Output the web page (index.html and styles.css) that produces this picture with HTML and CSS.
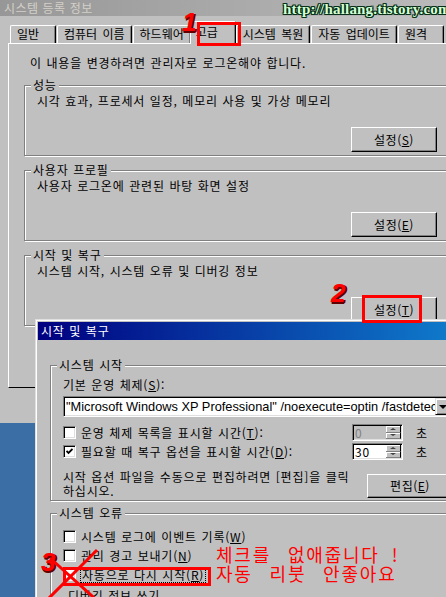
FILE: index.html
```html
<!DOCTYPE html>
<html lang="ko">
<head>
    <meta charset="UTF-8">
    <title>시스템 등록 정보</title>
    <link rel="stylesheet" href="styles.css">
</head>
<body>
    <div class="window">
        <div class="titlebar">시스템 등록 정보</div>
        <div class="tabs">
            <div class="tab">일반</div>
            <div class="tab">컴퓨터 이름</div>
            <div class="tab">하드웨어</div>
            <div class="tab active">고급</div>
            <div class="tab">시스템 복원</div>
            <div class="tab">자동 업데이트</div>
            <div class="tab">원격</div>
        </div>
        <div class="panel">
            <p class="notice">이 내용을 변경하려면 관리자로 로그온해야 합니다.</p>
            <div class="group">
                <span class="group-title">성능</span>
                <p class="group-desc">시각 효과, 프로세서 일정, 메모리 사용 및 가상 메모리</p>
                <button class="btn">설정(<u>S</u>)</button>
            </div>
            <div class="group">
                <span class="group-title">사용자 프로필</span>
                <p class="group-desc">사용자 로그온에 관련된 바탕 화면 설정</p>
                <button class="btn">설정(<u>E</u>)</button>
            </div>
            <div class="group">
                <span class="group-title">시작 및 복구</span>
                <p class="group-desc">시스템 시작, 시스템 오류 및 디버깅 정보</p>
                <button class="btn">설정(<u>T</u>)</button>
            </div>
        </div>
    </div>

    <div class="dialog">
        <div class="dialog-title">
            <span class="dialog-name">시작 및 복구</span>
            <span class="title-btn">?</span>
            <span class="title-btn">×</span>
        </div>
        <div class="dialog-body">
            <div class="group dlg-group">
                <span class="group-title">시스템 시작</span>
                <p class="field-label">기본 운영 체제(<u>S</u>):</p>
                <div class="select">
                    <span class="select-text">"Microsoft Windows XP Professional" /noexecute=optin /fastdetect</span>
                    <span class="select-arrow"><i class="tri-down"></i></span>
                </div>
                <div class="opt-row first">
                    <label class="check-line"><span class="check"></span><span>운영 체제 목록을 표시할 시간(<u>T</u>):</span></label>
                    <div class="spin disabled">
                        <span class="spin-value">0</span>
                        <span class="spin-btns"><span class="spin-btn"><i class="tri-up"></i></span><span class="spin-btn"><i class="tri-down small"></i></span></span>
                    </div>
                    <span class="unit">초</span>
                </div>
                <div class="opt-row">
                    <label class="check-line"><span class="check"><svg width="7" height="7" viewBox="0 0 7 7"><polyline points="0.5,3 2.5,5 6.5,1" fill="none" stroke="#000" stroke-width="1.8"/></svg></span><span>필요할 때 복구 옵션을 표시할 시간(<u>D</u>):</span></label>
                    <div class="spin">
                        <span class="spin-value">30</span>
                        <span class="spin-btns"><span class="spin-btn"><i class="tri-up"></i></span><span class="spin-btn"><i class="tri-down small"></i></span></span>
                    </div>
                    <span class="unit">초</span>
                </div>
                <div class="edit-row">
                    <p class="edit-text">시작 옵션 파일을 수동으로 편집하려면 [편집]을 클릭 하십시오.</p>
                    <button class="btn btn-edit">편집(<u>E</u>)</button>
                </div>
            </div>

            <div class="group dlg-group errors">
                <span class="group-title">시스템 오류</span>
                <label class="check-line row first"><span class="check"></span><span>시스템 로그에 이벤트 기록(<u>W</u>)</span></label>
                <label class="check-line row"><span class="check"></span><span>관리 경고 보내기(<u>N</u>)</span></label>
                <label class="check-line row"><span class="check"></span><span class="focus">자동으로 다시 시작(<u>R</u>)</span></label>
                <p class="sub-title">디버깅 정보 쓰기</p>
            </div>
        </div>
    </div>

    <div class="watermark">http://hallang.tistory.com</div>

    <span class="num num-1">1</span>
    <span class="num num-2">2</span>
    <span class="num num-3">3</span>
    <div class="mark mark-tab"></div>
    <div class="mark mark-btn"></div>
    <div class="mark mark-check"></div>
    <svg class="cross" width="70" height="60" viewBox="0 0 70 60">
        <line x1="5" y1="57" x2="57" y2="5" stroke="#f00" stroke-width="3"/>
        <line x1="10" y1="13" x2="62" y2="60" stroke="#f00" stroke-width="3"/>
    </svg>
    <div class="memo">체크를 없애줍니다<span class="bang">!</span><br>자동 리붓 안좋아요</div>
</body>
</html>
```

FILE: styles.css
```css
body {
    margin: 0;
    width: 446px;
    height: 597px;
    overflow: hidden;
    position: relative;
    background: #3a6ea5;
    font-family: "Noto Sans CJK KR", "Noto Sans", sans-serif;
    font-size: 12px;
    line-height: 14px;
    letter-spacing: 0.8px;
    word-spacing: 0.5px;
    color: #000;
}

p {
    margin: 0;
}

/* main window */

.window {
    width: 480px;
    height: 423px;
    background: #c0c0c0;
}

.titlebar {
    height: 16px;
    line-height: 16px;
    padding-left: 4px;
    letter-spacing: 0.4px;
    color: #d4d0c8;
    background: linear-gradient(90deg, #979797, #bdbdbd);
}

.tabs {
    display: flex;
    align-items: flex-end;
    gap: 1px;
    height: 27px;
    padding-left: 10px;
    letter-spacing: normal;
    word-spacing: 2px;
}

.tab {
    flex: none;
    box-sizing: border-box;
    min-width: 46px;
    height: 18px;
    padding: 0 6px;
    line-height: 16px;
    border-top: 1px solid #fff;
    border-left: 1px solid #fff;
    border-right: 1px solid #000;
    border-radius: 2px 2px 0 0;
    box-shadow: inset -1px 0 #808080;
}

.tab.active {
    position: relative;
    z-index: 1;
    height: 23px;
    margin: 0 -1px -1px -2px;
    padding: 2px 8px 0 5px;
    background: #c0c0c0;
}

.panel {
    box-sizing: border-box;
    width: 470px;
    height: 345px;
    margin-left: 8px;
    padding: 12px 0 0 15px;
    border-top: 1px solid #fff;
    border-left: 1px solid #fff;
    border-bottom: 1px solid #000;
}

.notice {
    margin: 0 0 15px 6px;
}

/* etched group box */

.group {
    display: flex;
    flex-direction: column;
    box-sizing: border-box;
    width: 425px;
    height: 71px;
    margin: 0 0 14px;
    padding: 0 11px 3px 12px;
    border: 1px solid #808080;
    box-shadow: inset 1px 1px #fff, 1px 1px #fff;
}

.group-title {
    align-self: flex-start;
    margin: -8px 0 0 -6px;
    padding: 0 2px;
    background: #c0c0c0;
}

.group-desc {
    margin-top: 2px;
}

.btn {
    align-self: flex-end;
    box-sizing: border-box;
    width: 86px;
    height: 25px;
    margin-top: auto;
    padding: 0;
    font: inherit;
    letter-spacing: 0.5px;
    color: #000;
    background: #c0c0c0;
    border: 1px solid;
    border-color: #fff #000 #000 #fff;
    box-shadow: inset -1px -1px #808080;
}

/* dialog */

.dialog {
    position: absolute;
    left: 35px;
    top: 319px;
    z-index: 2;
    width: 446px;
    height: 300px;
    padding: 2px;
    background: #c0c0c0;
    border: 1px solid;
    border-color: #dfdfdf #000 #000 #dfdfdf;
    box-shadow: inset 1px 1px #fff, inset -1px -1px #808080;
}

.dialog-title {
    display: flex;
    align-items: center;
    gap: 2px;
    height: 18px;
    padding: 0 2px 0 3px;
    color: #fff;
    background: linear-gradient(90deg, #000080, #1084d0);
}

.dialog-name {
    flex: 1;
}

.title-btn {
    box-sizing: border-box;
    width: 16px;
    height: 14px;
    font-size: 10px;
    line-height: 11px;
    letter-spacing: normal;
    text-align: center;
    color: #000;
    background: #c0c0c0;
    border: 1px solid;
    border-color: #fff #000 #000 #fff;
    box-shadow: inset -1px -1px #808080;
}

.dialog-body {
    padding: 25px 12px 0;
}

.dlg-group {
    width: 416px;
    height: auto;
    margin: 0;
    padding: 0 12px 2px;
}

.field-label {
    margin-top: 6px;
}

.select {
    display: flex;
    box-sizing: border-box;
    height: 21px;
    margin-top: 4px;
    background: #fff;
    border: 1px solid;
    border-color: #808080 #fff #fff #808080;
    box-shadow: inset 1px 1px #000, inset -1px -1px #dfdfdf;
}

.select-text {
    flex: 1;
    overflow: hidden;
    padding-left: 2px;
    font-family: "Liberation Sans", Arial, sans-serif;
    font-size: 12.8px;
    line-height: 19px;
    letter-spacing: normal;
    word-spacing: normal;
    white-space: nowrap;
}

.select-arrow {
    flex: none;
    display: flex;
    align-items: center;
    justify-content: center;
    box-sizing: border-box;
    width: 16px;
    margin: 1px 1px 1px 0;
    background: #c0c0c0;
    border: 1px solid;
    border-color: #dfdfdf #000 #000 #dfdfdf;
    box-shadow: inset 1px 1px #fff, inset -1px -1px #808080;
}

.tri-down {
    border-top: 4px solid #000;
    border-left: 4px solid transparent;
    border-right: 4px solid transparent;
}

.tri-up {
    border-bottom: 2px solid #404040;
    border-left: 3px solid transparent;
    border-right: 3px solid transparent;
}

.tri-down.small {
    border-top: 2px solid #404040;
    border-left-width: 3px;
    border-right-width: 3px;
}

.opt-row {
    display: grid;
    grid-template-columns: 1fr 51px 50px;
    align-items: center;
    height: 19px;
}

.opt-row.first {
    margin-top: 6px;
}

.check-line {
    display: flex;
    align-items: center;
    gap: 5px;
    white-space: nowrap;
}

.check {
    flex: none;
    display: flex;
    align-items: center;
    justify-content: center;
    box-sizing: border-box;
    width: 13px;
    height: 13px;
    background: #fff;
    border: 1px solid;
    border-color: #808080 #fff #fff #808080;
    box-shadow: inset 1px 1px #000, inset -1px -1px #dfdfdf;
}

.spin {
    display: flex;
    box-sizing: border-box;
    height: 17px;
    background: #fff;
    border: 1px solid;
    border-color: #808080 #fff #fff #808080;
    box-shadow: inset 1px 1px #000, inset -1px -1px #dfdfdf;
}

.spin.disabled {
    color: #808080;
    background: #c0c0c0;
}

.spin-value {
    flex: 1;
    padding-left: 2px;
    line-height: 15px;
}

.spin-btns {
    display: flex;
    flex-direction: column;
    width: 15px;
    margin: 1px 1px 1px 0;
}

.spin-btn {
    flex: 1;
    display: flex;
    align-items: center;
    justify-content: center;
    background: #c0c0c0;
    border-right: 1px solid #000;
    border-bottom: 1px solid #808080;
    box-shadow: inset 1px 1px #fff;
}

.unit {
    padding-left: 13px;
}

.edit-row {
    display: flex;
    align-items: flex-start;
    gap: 6px;
    margin-top: 9px;
}

.edit-text {
    flex: 1;
    word-break: keep-all;
}

.btn-edit {
    flex: none;
    height: 24px;
    margin-top: 0;
}

.errors {
    height: 110px;
    margin-top: 12px;
}

.row {
    flex: none;
    height: 19px;
}

.row.first {
    margin-top: 7px;
}

.focus {
    padding: 0 1px;
    outline: 1px dotted #000;
}

.sub-title {
    margin: 5px 0 0 5px;
}

/* annotations */

.watermark {
    position: absolute;
    left: 283px;
    top: 1px;
    z-index: 3;
    font: bold 15px/16px "Liberation Serif", serif;
    letter-spacing: 0.2px;
    word-spacing: normal;
    color: #d6ffd6;
    text-shadow: 1px 0 #063018, -1px 0 #063018, 0 1px #063018, 0 -1px #063018, 1px 1px #063018, -1px -1px #063018, 1px -1px #063018, -1px 1px #063018;
}

.num {
    position: absolute;
    z-index: 3;
    font: italic bold 26px/26px "Liberation Sans", sans-serif;
    letter-spacing: normal;
    color: #f00;
    text-shadow: 1px 1px 0 #600000, 2px 1px 0 #600000, 1px 2px 0 #600000;
}

.num-1 {
    left: 182px;
    top: 9px;
}

.num-2 {
    left: 331px;
    top: 280px;
}

.num-3 {
    left: 41px;
    top: 549px;
}

.mark {
    position: absolute;
    z-index: 3;
    border: 3px solid #f00;
}

.mark-tab {
    left: 197px;
    top: 22px;
    width: 38px;
    height: 18px;
}

.mark-btn {
    left: 362px;
    top: 295px;
    width: 54px;
    height: 22px;
}

.mark-check {
    left: 63px;
    top: 567px;
    width: 142px;
    height: 13px;
}

.cross {
    position: absolute;
    left: 40px;
    top: 545px;
    z-index: 3;
}

.memo {
    position: absolute;
    left: 216px;
    top: 545px;
    z-index: 3;
    font-size: 18px;
    line-height: 19px;
    letter-spacing: 1.8px;
    word-spacing: 10px;
    color: #f00;
}

.bang {
    margin-left: 12px;
}
```
